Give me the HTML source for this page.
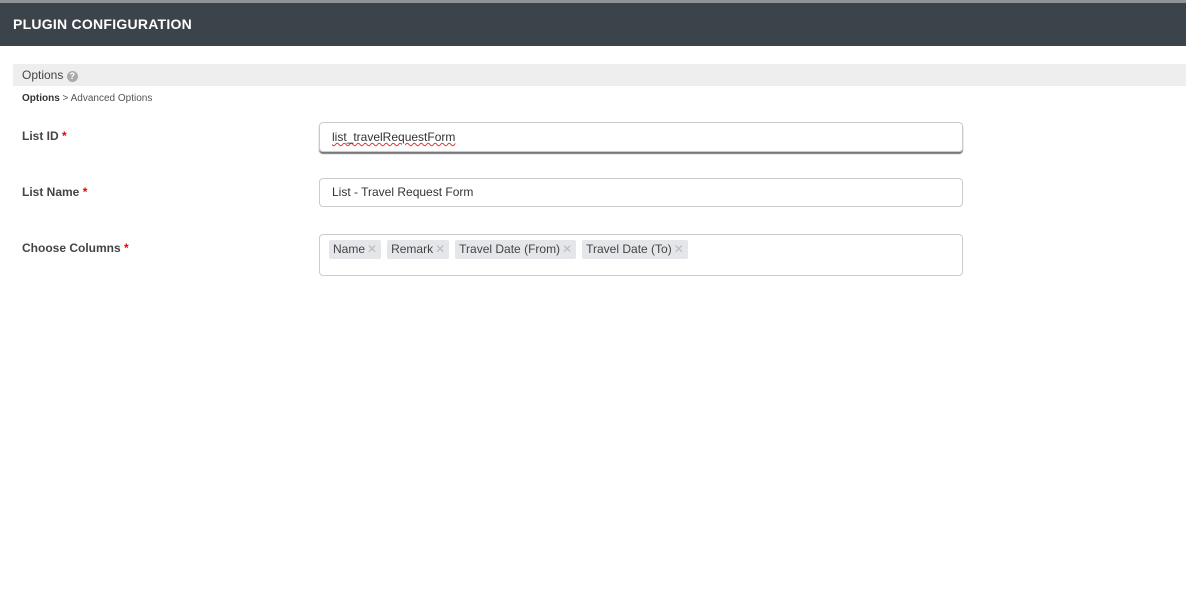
<!DOCTYPE html>
<html><head><style>
body{margin:0;width:1186px;height:596px;background:#fff;font-family:"Liberation Sans",sans-serif;position:relative;overflow:hidden}
.top{position:absolute;left:0;top:0;width:1186px;height:3px;background:#8f9396}
.hdr{position:absolute;left:0;top:3px;width:1186px;height:43px;background:#3b434b;color:#fff;font-weight:bold;font-size:14px;letter-spacing:0.25px;line-height:43px;padding-left:13px;box-sizing:border-box}
.opt{position:absolute;left:13px;top:64px;width:1173px;height:22px;background:#eee;color:#444;font-size:12px;line-height:22px;padding-left:9px;box-sizing:border-box}
.q{display:inline-block;width:11px;height:11px;border-radius:50%;background:#aaa;color:#fff;font-size:9px;line-height:11px;text-align:center;font-weight:bold;vertical-align:-1px}
.bc{position:absolute;left:22px;top:93px;font-size:10px;color:#555}
.bc b{color:#333}
.lbl{position:absolute;left:22px;font-size:12px;font-weight:bold;color:#444}
.lbl span{color:#e00}
.in{position:absolute;left:319px;width:644px;box-sizing:border-box;border:1px solid #ccc;border-radius:4px;font-size:12px;color:#333;padding-left:12px}
.tag{display:inline-block;background:#e4e6e9;color:#444;font-size:12px;height:19px;line-height:19px;padding:0 4px;margin-right:6px;border-radius:2px}
.tag i{font-style:normal;color:#bbb;margin-left:2px}
</style></head><body>
<div class="top"></div>
<div class="hdr">PLUGIN CONFIGURATION</div>
<div class="opt">Options <span class="q" style="vertical-align:0">?</span></div>
<div class="bc"><b>Options</b> &gt; Advanced Options</div>
<div class="lbl" style="top:129px">List ID <span>*</span></div>
<div class="in" style="top:122px;height:30px;line-height:28px;box-shadow:0 2px 1px #777"><span style="text-decoration:underline wavy #d33;text-decoration-thickness:1px">list_travelRequestForm</span></div>
<div class="lbl" style="top:185px">List Name <span>*</span></div>
<div class="in" style="top:178px;height:29px;line-height:27px">List - Travel Request Form</div>
<div class="lbl" style="top:241px">Choose Columns <span>*</span></div>
<div class="in" style="top:234px;height:42px;padding:5px 0 0 9px"><span class="tag">Name<i>✕</i></span><span class="tag">Remark<i>✕</i></span><span class="tag">Travel Date (From)<i>✕</i></span><span class="tag">Travel Date (To)<i>✕</i></span></div>
</body></html>
